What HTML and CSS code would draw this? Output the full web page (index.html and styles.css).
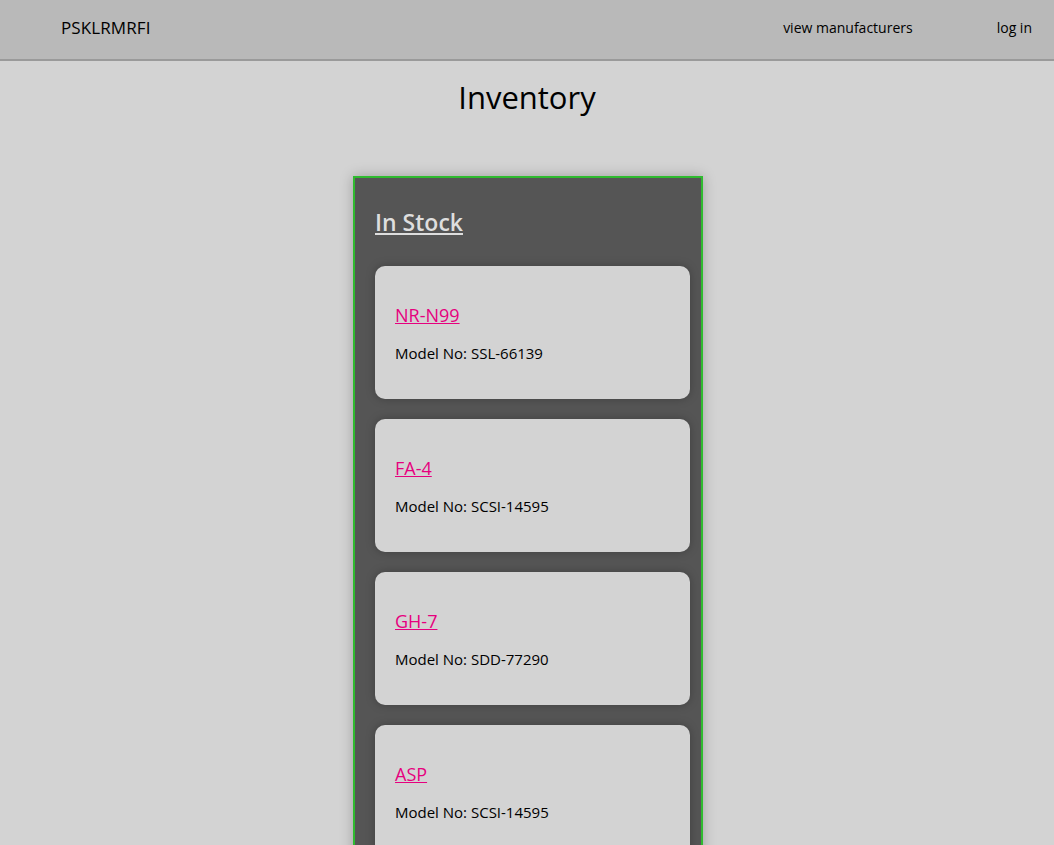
FILE: index.html
```html
<!DOCTYPE html>
<html>
<head>
<meta charset="utf-8">
<title>Inventory</title>
<link rel="stylesheet" href="styles.css">
</head>
<body>
<header class="navbar">
  <a class="brand" href="#">PSKLRMRFI</a>
  <nav class="nav-links">
    <a href="#" class="nav-link">view manufacturers</a>
    <a href="#" class="nav-link">log in</a>
  </nav>
</header>
<main class="page">
  <h1 class="page-title">Inventory</h1>
  <section class="stock">
    <h2 class="stock-title"><a href="#">In Stock</a></h2>
    <div class="card">
      <h3 class="card-title"><a href="#">NR-N99</a></h3>
      <p class="card-text">Model No: SSL-66139</p>
    </div>
    <div class="card">
      <h3 class="card-title"><a href="#">FA-4</a></h3>
      <p class="card-text">Model No: SCSI-14595</p>
    </div>
    <div class="card">
      <h3 class="card-title"><a href="#">GH-7</a></h3>
      <p class="card-text">Model No: SDD-77290</p>
    </div>
    <div class="card">
      <h3 class="card-title"><a href="#">ASP</a></h3>
      <p class="card-text">Model No: SCSI-14595</p>
    </div>
  </section>
</main>
</body>
</html>
```

FILE: styles.css
```css
html, body {
  margin: 0;
  padding: 0;
}
body {
  background: #d3d3d3;
  font-family: "Open Sans", "Noto Sans", sans-serif;
  color: #000;
}
.navbar {
  box-sizing: border-box;
  background: #b9b9b9;
  border-bottom: 2px solid #9a9a9a;
  height: 61px;
  display: flex;
  align-items: center;
  justify-content: space-between;
  padding: 0 22px 5px 61px;
}
.brand {
  color: #000;
  text-decoration: none;
  font-size: 17px;
  letter-spacing: 0.1px;
}
.nav-links {
  display: flex;
  gap: 84px;
}
.nav-link {
  color: #000;
  text-decoration: none;
  font-size: 14px;
}
.page {
  display: flex;
  flex-direction: column;
  align-items: center;
}
.page-title {
  margin: 17px 0 0;
  font-size: 31px;
  font-weight: 500;
  line-height: 38px;
}
.stock {
  margin: 60px 0 0 2px;
  box-sizing: border-box;
  border: 2px solid #2fbb2f;
  width: 350px;
  background: #555555;
  box-shadow: 0 0 12px rgba(0, 0, 0, 0.25);
  padding: 20px 11px 20px 20px;
}
.stock-title {
  margin: 9px 0 29px;
  font-size: 23px;
  line-height: 30px;
  font-weight: 600;
}
.stock-title a {
  color: #dedede;
}
.card {
  background: #d3d3d3;
  border-radius: 10px;
  padding: 20px;
  margin-bottom: 20px;
  box-shadow: 0 0 10px rgba(0, 0, 0, 0.25);
}
.card-title {
  margin: 18px 0 18px;
  font-size: 18px;
  line-height: 22px;
  font-weight: 500;
}
.card-title a {
  color: #e6007e;
}
.card-text {
  margin: 0 0 16px;
  font-size: 15px;
  line-height: 19px;
}
```
